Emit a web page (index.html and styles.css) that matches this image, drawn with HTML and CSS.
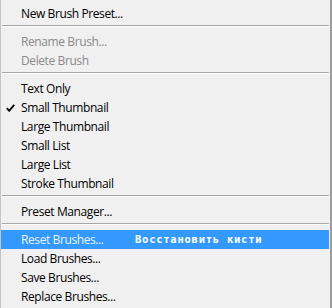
FILE: index.html
```html
<!DOCTYPE html>
<html>
<head>
<meta charset="utf-8">
<link rel="stylesheet" href="styles.css">
</head>
<body>
<div class="menu">
  <div class="item">New Brush Preset...</div>
  <div class="sep"></div>
  <div class="item disabled">Rename Brush...</div>
  <div class="item disabled">Delete Brush</div>
  <div class="sep"></div>
  <div class="item">Text Only</div>
  <div class="item checked">
    <svg class="check" width="9" height="8" viewBox="0 0 9 8"><path d="M0.8 4.2 L3.2 6.8 L8.2 0.8" fill="none" stroke="#000" stroke-width="1.8"/></svg>
    Small Thumbnail
  </div>
  <div class="item">Large Thumbnail</div>
  <div class="item">Small List</div>
  <div class="item">Large List</div>
  <div class="item">Stroke Thumbnail</div>
  <div class="sep"></div>
  <div class="item">Preset Manager...</div>
  <div class="sep"></div>
  <div class="item active"><span class="label">Reset Brushes...</span><span class="note">Восстановить кисти</span></div>
  <div class="item">Load Brushes...</div>
  <div class="item">Save Brushes...</div>
  <div class="item">Replace Brushes...</div>
</div>
</body>
</html>
```
FILE: styles.css
```css
html, body {
  margin: 0;
  padding: 0;
  background: #f0f0f0;
}
.menu {
  box-sizing: border-box;
  width: 332px;
  height: 308px;
  background: #f0f0f0;
  border-left: 1px solid #c4c4c4;
  border-right: 2px solid #9c9c9c;
  padding-top: 4px;
  font-family: "Open Sans", "Noto Sans", sans-serif;
  font-size: 12px;
  letter-spacing: -0.4px;
  color: #000;
}
.item {
  position: relative;
  height: 19px;
  line-height: 19px;
  padding-left: 20px;
  display: flex;
  align-items: center;
  white-space: nowrap;
}
.disabled {
  color: #8a8a8a;
}
.check {
  position: absolute;
  left: 5px;
  top: 6px;
}
.active {
  background: #3399ff;
  color: #e8f3ff;
  margin-right: 1px;
}
.label {
  width: 114px;
}
.note {
  font-family: "DejaVu Sans Mono", monospace;
  font-weight: bold;
  font-size: 10.5px;
  letter-spacing: 0.75px;
  color: #ffffff;
}
.sep {
  height: 9px;
  box-sizing: border-box;
  padding-top: 2px;
  margin: 0 1px 0 1px;
}
.sep::before {
  content: "";
  display: block;
  height: 1px;
  background: #a6a6a6;
  border-bottom: 1px solid #ffffff;
}
```
